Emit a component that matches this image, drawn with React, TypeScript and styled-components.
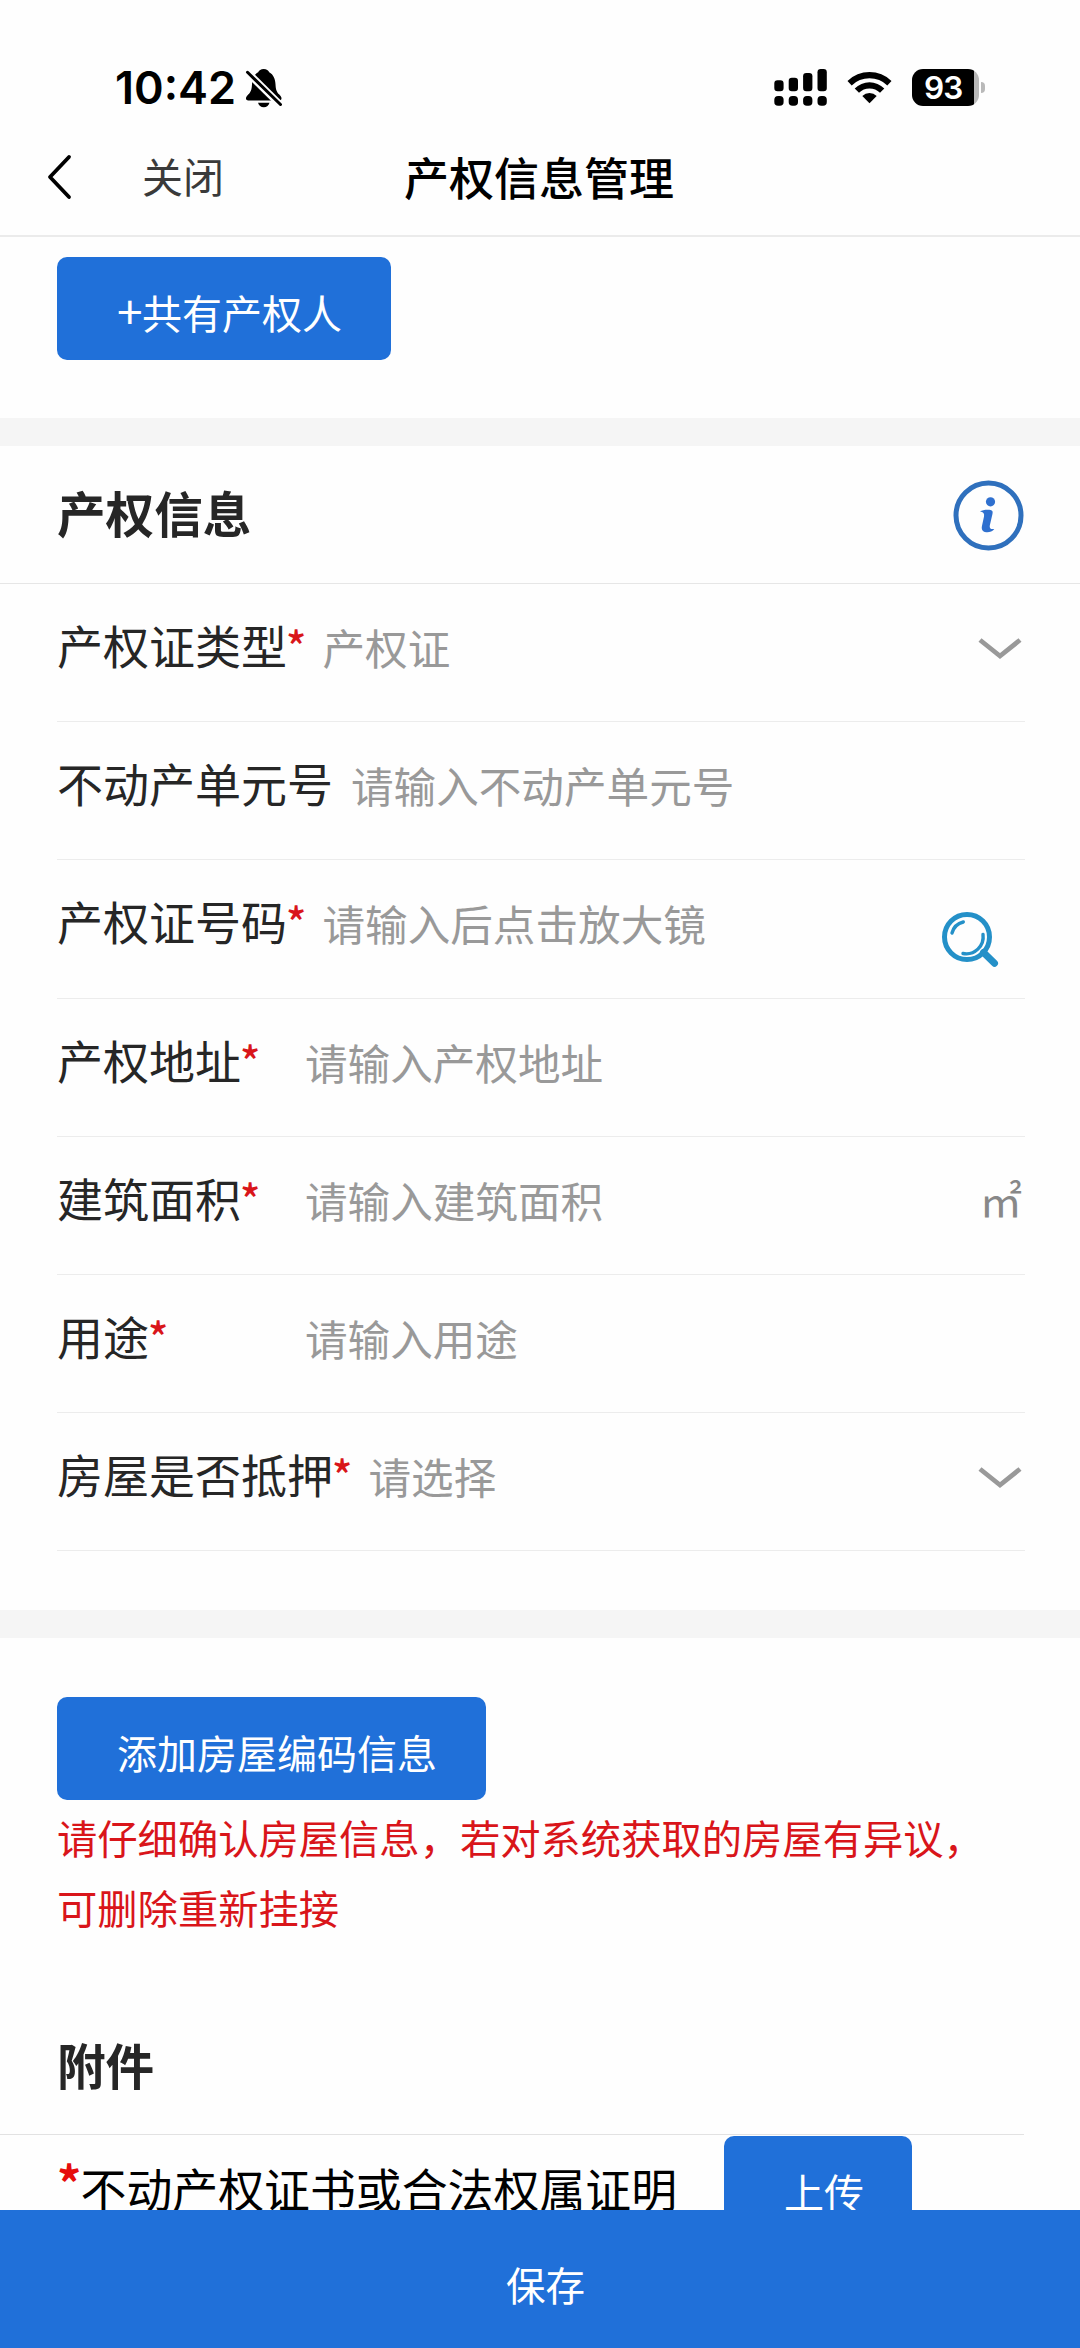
import React from "react";
import styled, { createGlobalStyle } from "styled-components";

const BLUE = "#2070d9";
const RED = "#d9151a";

const GlobalStyle = createGlobalStyle`
  * { box-sizing: border-box; }
  body {
    margin: 0;
    background: #fefefe;
    font-family: "Noto Sans CJK SC", sans-serif;
  }
  button, input { font-family: inherit; }
  svg { display: block; }
`;

const Screen = styled.div`
  width: 1080px;
  height: 2348px;
  display: flex;
  flex-direction: column;
  overflow: hidden;
  background: #fefefe;
`;

const StatusBar = styled.div`
  height: 118px;
  flex: none;
  display: flex;
  justify-content: space-between;
  padding: 61px 95px 0 115px;
`;

const StatusLeft = styled.div`
  display: flex;
  align-items: flex-start;
  gap: 8px;
`;

const Clock = styled.span`
  width: 122px;
  font: 600 45px/54px Inter, sans-serif;
  letter-spacing: 0;
  color: #000;
  white-space: nowrap;
`;

const BellBox = styled.div`
  padding-top: 7px;
`;

const StatusRight = styled.div`
  display: flex;
  align-items: flex-start;
  padding-top: 8px;
`;

const SignalBox = styled.div`
  margin-right: 20px;
`;

const WifiBox = styled.div`
  padding-top: 2px;
  margin-right: 20px;
`;

const Battery = styled.div`
  width: 67px;
  height: 37px;
  border-radius: 11px;
  background: linear-gradient(to right, #000 62px, #b9b9b9 62px);
  color: #fff;
  font: 600 31.5px/37px Inter, sans-serif;
  padding-left: 12px;
  letter-spacing: -0.8px;
`;

const BatteryTip = styled.div`
  width: 4px;
  height: 11px;
  margin: 13px 0 0 2px;
  border-radius: 0 5px 5px 0;
  background: #b9b9b9;
`;

const NavBar = styled.header`
  height: 119px;
  flex: none;
  display: grid;
  grid-template-columns: 404px 1fr;
  border-bottom: 2px solid #ebebeb;
`;

const NavLeft = styled.div`
  display: flex;
  align-items: flex-start;
  padding: 36px 0 0 45px;
`;

const CloseText = styled.span`
  margin-left: 70px;
  padding-top: 1px;
  font-size: 41px;
  line-height: 41px;
  color: #3a3a3a;
`;

const NavTitle = styled.h1`
  margin: 0;
  padding-top: 26px;
  font-size: 45px;
  line-height: 65px;
  font-weight: 500;
  color: #000;
`;

const Content = styled.main`
  flex: 1;
  min-height: 0;
  overflow: hidden;
`;

const OwnerSection = styled.section`
  height: 181px;
  padding: 20px 57px 0;
`;

const PrimaryButton = styled.button<{ $width: number }>`
  display: block;
  width: ${(p) => p.$width}px;
  height: 103px;
  flex: none;
  margin: 0;
  border: 0;
  border-radius: 10px;
  background: ${BLUE};
  padding: 8px 0 0 60px;
  text-align: left;
  white-space: nowrap;
  color: #fff;
  font-size: 40px;
  line-height: 95px;
`;

const Plus = styled.span`
  display: inline-block;
  width: 25px;
  font-size: 46px;
  line-height: 1;
`;

const Band = styled.div`
  height: 28px;
  background: #f5f5f5;
`;

const SectionHead = styled.div`
  height: 138px;
  display: flex;
  justify-content: space-between;
  padding: 0 56px 0 57px;
  border-bottom: 1px solid #e6e6e6;
`;

const InfoBox = styled.div`
  padding-top: 34px;
`;

const SectionTitle = styled.h2<{ $line: number }>`
  margin: 0;
  font-size: 48.6px;
  font-weight: 700;
  line-height: ${(p) => p.$line}px;
  color: #262626;
`;

const Form = styled.div`
  padding: 0 55px 0 57px;
  height: 1026px;
`;

const Row = styled.div`
  height: 138.2px;
  display: flex;
  align-items: flex-start;
  border-bottom: 1px solid #ececec;
`;

const Label = styled.label`
  min-width: 230px;
  flex: none;
  display: flex;
  font-size: 46px;
  line-height: 120px;
  color: #262626;
`;

const Star = styled.span`
  width: 17.5px;
  color: ${RED};
  font: 500 42px/122px "Noto Sans CJK SC", sans-serif;
  text-indent: -1px;
`;

const Value = styled.span`
  flex: 1;
  margin-left: 18px;
  padding-top: 3px;
  font-size: 42.6px;
  line-height: 120px;
  color: #999;
`;

const Trailing = styled.div<{ $top: number; $right: number }>`
  flex: none;
  padding: ${(p) => p.$top}px ${(p) => p.$right}px 0 0;
`;

const Unit = styled.span`
  display: block;
  font-size: 42.6px;
  line-height: 60px;
  color: #888;
`;

const HouseSection = styled.section`
  height: 341px;
  padding: 59px 57px 0;
`;

const Notice = styled.p`
  margin: 2px 0 0;
  width: 966px;
  font-size: 40.3px;
  line-height: 70px;
  color: ${RED};
`;

const AttachHead = styled.div`
  height: 156px;
  padding: 20px 0 0 57px;
  margin-right: 56px;
  border-bottom: 1px solid #e2e2e2;
`;

const AttachRow = styled.div`
  display: flex;
  align-items: flex-start;
  padding: 1px 0 0 57px;
`;

const AttachLabel = styled.div`
  width: 667px;
  display: flex;
  font-size: 45.9px;
  line-height: 102px;
  color: #000;
`;

const AttachStar = styled.span`
  width: 23.5px;
  color: #e60c0c;
  font-size: 48px;
  font-weight: 700;
  line-height: 90px;
`;

const SaveBar = styled.button`
  flex: none;
  height: 138px;
  margin: 0;
  border: 0;
  padding: 8px 0 0 11px;
  background: ${BLUE};
  color: #fff;
  font-size: 39.5px;
`;

const BellOff = () => (
  <svg width="38" height="40" viewBox="0 0 38 40">
    <path
      d="M18.700 1c-2.800 0-4.800 1.300-5.500 3.200C9 6.500 7.300 11 7 16.200c-.2 5.300-1.200 7.800-3.800 10.400C1.500 28.400 1 29.300 1 30.500c0 1.300.9 2 2.300 2h30.900c1.400 0 2.300-.7 2.300-2 0-1.200-.5-2.100-2.200-3.900-2.600-2.600-3.600-5.100-3.800-10.400C30.200 11 28.500 6.500 24.200 4.200 23.500 2.300 21.500 1 18.700 1z"
      fill="#000"
    />
    <path d="M13 34.700h11.500c-.6 2.600-2.800 4.500-5.700 4.500s-5.200-1.900-5.800-4.500z" fill="#000" />
    <path d="M-1 1L38 39.500" stroke="#fefefe" strokeWidth="7.200" />
    <path d="M2.500 4.300L35.500 36.500" stroke="#000" strokeWidth="3" strokeLinecap="round" />
  </svg>
);

const Signal = () => (
  <svg width="53" height="37" viewBox="0 0 53 37">
    {[11.300, 8.700, 4, 0].map((top, i) => (
      <g key={top}>
        <rect x={0.300 + i * 14.400} y={top} width="9.300" height={22.200 - top} rx="3.200" />
        <rect x={0.300 + i * 14.400} y="27" width="9.300" height="9.700" rx="3.800" />
      </g>
    ))}
  </svg>
);

const Wifi = () => (
  <svg width="45" height="34" viewBox="0 0 45 34">
    <path d="M0.500 10A31.500 31.500 0 0 1 44.500 10L40.300 14.400A25.500 25.500 0 0 0 4.700 14.400Z" />
    <path d="M7.700 17.400A21 21 0 0 1 37.300 17.400L33 21.700A15 15 0 0 0 12 21.700Z" />
    <path d="M15.300 25A10.300 10.300 0 0 1 29.700 25L22.500 32.300Z" />
  </svg>
);

const Back = () => (
  <svg width="27" height="46" viewBox="0 0 27 46">
    <path
      d="M24 3L5 23L24 43"
      fill="none"
      stroke="#000"
      strokeWidth="3.800"
      strokeLinecap="round"
      strokeLinejoin="round"
    />
  </svg>
);

const Info = () => (
  <svg width="71" height="71" viewBox="0 0 71 71" fill="none">
    <circle cx="35.500" cy="35.500" r="32.500" stroke="#2f70bd" strokeWidth="5" />
    <circle cx="37.500" cy="21.800" r="4.600" fill="#2f70cf" />
    <path
      d="M27 31.500C30 29.600 35 29.300 38.300 30.200C40 30.800 39.800 32.500 39.400 34.300L36.800 45.500C36.200 48.300 37.800 49.500 41.300 49C39.500 51.600 36 52.500 33.300 52.200C29 51.800 28.300 49 29 45.800L31 36.500C31.600 33.500 30.300 32 27 31.500Z"
      fill="#2f70cf"
    />
  </svg>
);

const ChevronDown = () => (
  <svg width="44" height="24" viewBox="0 0 44 24">
    <path d="M2 3L22 19L42 3" fill="none" stroke="#999" strokeWidth="4.800" />
  </svg>
);

const Magnifier = () => (
  <svg width="60" height="58" viewBox="0 0 60 58" fill="none" stroke="#2490c8" strokeLinecap="round">
    <circle cx="27" cy="27" r="22.500" strokeWidth="5" />
    <path d="M43.500 42.500L54.500 53.300" strokeWidth="7" />
    <path d="M12 23A15.500 15.500 0 0 1 23.300 12" strokeWidth="3.400" />
    <path d="M43 24.500A17 17 0 0 1 23 43.500" strokeWidth="3.400" />
  </svg>
);

type Field = {
  label: string;
  value: string;
  required?: boolean;
  trailing?: "chevron" | "search" | "unit";
};

const fields: Field[] = [
  { label: "产权证类型", value: "产权证", required: true, trailing: "chevron" },
  { label: "不动产单元号", value: "请输入不动产单元号" },
  { label: "产权证号码", value: "请输入后点击放大镜", required: true, trailing: "search" },
  { label: "产权地址", value: "请输入产权地址", required: true },
  { label: "建筑面积", value: "请输入建筑面积", required: true, trailing: "unit" },
  { label: "用途", value: "请输入用途", required: true },
  { label: "房屋是否抵押", value: "请选择", required: true, trailing: "chevron" },
];

const FieldRow = ({ label, value, required, trailing }: Field) => (
  <Row>
    <Label>
      {label}
      {required && <Star>*</Star>}
    </Label>
    <Value>{value}</Value>
    {trailing === "chevron" && (
      <Trailing $top={53} $right={3}>
        <ChevronDown />
      </Trailing>
    )}
    {trailing === "search" && (
      <Trailing $top={50} $right={25}>
        <Magnifier />
      </Trailing>
    )}
    {trailing === "unit" && (
      <Trailing $top={32} $right={3}>
        <Unit>㎡</Unit>
      </Trailing>
    )}
  </Row>
);

export default function App() {
  return (
    <>
      <GlobalStyle />
      <Screen>
        <StatusBar>
          <StatusLeft>
            <Clock>10:42</Clock>
            <BellBox>
              <BellOff />
            </BellBox>
          </StatusLeft>
          <StatusRight>
            <SignalBox>
              <Signal />
            </SignalBox>
            <WifiBox>
              <Wifi />
            </WifiBox>
            <Battery>93</Battery>
            <BatteryTip />
          </StatusRight>
        </StatusBar>
        <NavBar>
          <NavLeft>
            <Back />
            <CloseText>关闭</CloseText>
          </NavLeft>
          <NavTitle>产权信息管理</NavTitle>
        </NavBar>
        <Content>
          <OwnerSection>
            <PrimaryButton $width={334}>
              <Plus>+</Plus>共有产权人
            </PrimaryButton>
          </OwnerSection>
          <Band />
          <SectionHead>
            <SectionTitle $line={133}>产权信息</SectionTitle>
            <InfoBox>
              <Info />
            </InfoBox>
          </SectionHead>
          <Form>
            {fields.map((f) => (
              <FieldRow key={f.label} {...f} />
            ))}
          </Form>
          <Band />
          <HouseSection>
            <PrimaryButton $width={429}>添加房屋编码信息</PrimaryButton>
            <Notice>请仔细确认房屋信息，若对系统获取的房屋有异议，可删除重新挂接</Notice>
          </HouseSection>
          <AttachHead>
            <SectionTitle $line={130}>附件</SectionTitle>
          </AttachHead>
          <AttachRow>
            <AttachLabel>
              <AttachStar>*</AttachStar>
              不动产权证书或合法权属证明
            </AttachLabel>
            <PrimaryButton $width={188}>上传</PrimaryButton>
          </AttachRow>
        </Content>
        <SaveBar>保存</SaveBar>
      </Screen>
    </>
  );
}
